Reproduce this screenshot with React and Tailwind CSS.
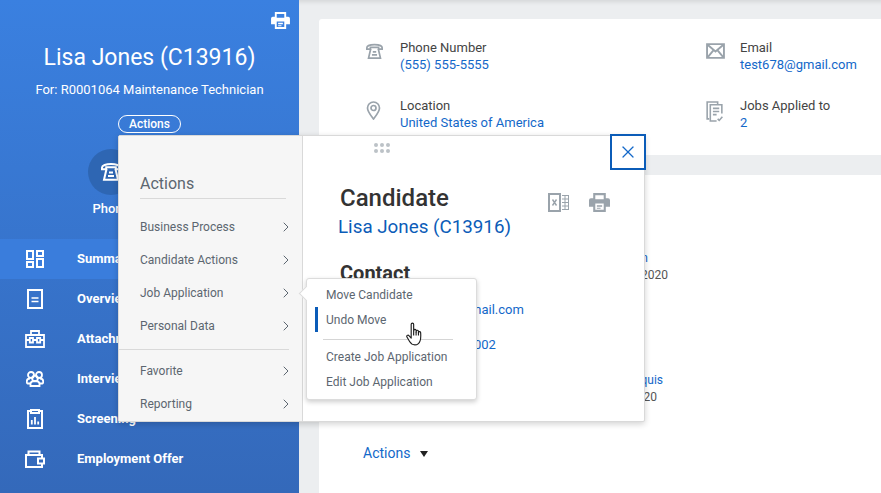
import React from 'react';
import { ChevronRight, X } from 'lucide-react';

const PrintIcon = ({ className }) => (
  <svg viewBox="0 0 20 18" className={className} fill="currentColor">
    <path fillRule="evenodd" d="M4 0h12v5h2.200A1.800 1.800 0 0 1 20 6.800V13h-4v5H4v-5H0V6.800A1.800 1.800 0 0 1 1.800 5H4V0zm2 2v4h8V2H6zM6 10v6h8v-6H6zm1.500 1.500h5V13h-5v-1.500zM7.500 14h3.500v1H7.500v-1z" />
  </svg>
);

const PhoneIcon = ({ className }) => (
  <svg viewBox="0 0 20 18" className={className} fill="none" stroke="currentColor" strokeWidth="2">
    <path d="M1 6.200V4.500C1 2.500 5 1 10 1s9 1.500 9 3.500v1.700h-4.200V4.200H5.200v2H1z" />
    <path d="M5.500 6 3 16.800h14L14.500 6" />
    <path d="M8 9.500h4M7 13h6" />
  </svg>
);

const MailIcon = ({ className }) => (
  <svg viewBox="0 0 18 15" className={className} fill="none" stroke="currentColor" strokeWidth="1.800">
    <path d="M1 1h16v13H1z" />
    <path d="m1.500 1.500 7.500 6.500 7.500-6.500M1.500 13.500 7 7M16.500 13.500 11 7" />
  </svg>
);

const PinIcon = ({ className }) => (
  <svg viewBox="0 0 14 19" className={className} fill="none" stroke="currentColor" strokeWidth="1.700">
    <path d="M7 18C3.500 13.500 1 10.500 1 7a6 6 0 0 1 12 0c0 3.500-2.500 6.500-6 11z" />
    <circle cx="7" cy="7" r="2.500" />
  </svg>
);

const JobsIcon = ({ className }) => (
  <svg viewBox="0 0 16 20" className={className} fill="none" stroke="currentColor" strokeWidth="1.500">
    <path d="M3 17H1V1h10v2" />
    <path d="M15 12V3.500H4V19h6" />
    <path d="M6.500 7H12.500M6.500 10H12.500M6.500 13H10" />
    <path d="m11 17 1.500 1.500L15.500 15" />
  </svg>
);

const SummaryIcon = () => (
  <svg viewBox="0 0 18 18" className="h-[18px] w-[18px]" fill="none" stroke="currentColor" strokeWidth="2">
    <path d="M1 1h6v8H1zM1 12h6v5H1zM11 1h6v5h-6zM11 9h6v8h-6z" />
  </svg>
);

const OverviewIcon = () => (
  <svg viewBox="0 0 16 20" className="h-[20px] w-[16px]" fill="none" stroke="currentColor" strokeWidth="2">
    <path d="M1 1h14v18H1z" />
    <path d="M4.500 9h7M4.500 12.500h7" strokeWidth="1.600" />
  </svg>
);

const AttachIcon = () => (
  <svg viewBox="0 0 20 18" className="h-[18px] w-[20px]" fill="none" stroke="currentColor" strokeWidth="1.800">
    <path d="M1 5h18v12H1zM6 4.500V1h8v3.500M1 10h3.500M15.500 10H19M8 10h4" />
    <path d="M4.800 8H8v4.500H4.800zM12 8h3.200v4.500H12z" />
  </svg>
);

const PeopleIcon = () => (
  <svg viewBox="0 0 18 16" className="h-[16px] w-[18px]" fill="none" stroke="currentColor" strokeWidth="1.800">
    <circle cx="5" cy="4" r="3" />
    <circle cx="13" cy="4" r="3" />
    <circle cx="9" cy="7.500" r="2.800" />
    <path d="M4.500 15v-2c0-2 2-3 4.500-3s4.500 1 4.500 3v2h-9z" />
    <path d="M4.500 12.500H1.500C.8 12.500.8 11.500.8 10.500c0-1.500 1.200-3 3.200-3M13.500 12.500h3c.7 0 .7-1 .7-2 0-1.500-1.200-3-3.200-3" />
  </svg>
);

const ScreenIcon = () => (
  <svg viewBox="0 0 16 20" className="h-[20px] w-[16px]" fill="none" stroke="currentColor" strokeWidth="2">
    <path d="M4 2H1v17h14V2h-3" />
    <path d="M4 1h8v3H4z" />
    <path d="M4.800 15.500V11M8 15.500V8M11.200 15.500V12.500" strokeWidth="1.800" />
  </svg>
);

const WalletIcon = () => (
  <svg viewBox="0 0 20 18" className="h-[18px] w-[20px]" fill="none" stroke="currentColor" strokeWidth="2">
    <path d="M1 5h16v12H1zM3.500 4.500V1.500h11v3" />
    <path d="M13 8.500h6v5h-6z" fill="#3469ba" />
  </svg>
);

const ExcelIcon = ({ className }) => (
  <svg viewBox="0 0 21 19" className={className} fill="none" stroke="currentColor">
    <path d="M1 1h11v17H1z" strokeWidth="2" />
    <path d="m4.500 6.500 4 6M8.500 6.500l-4 6" strokeWidth="1.400" />
    <path d="M14 2.500h6.500M14 6h6.500M14 9.500h6.500M14 13h6.500M14 16.500h6.500M17 2v15M20.500 2v15" strokeWidth="1" />
  </svg>
);

const HandCursor = ({ className }) => (
  <svg viewBox="0 0 18 26" className={className} fill="#fff" stroke="#1d1d1d" strokeWidth="1.200" strokeLinejoin="round">
    <path d="M5.500 2.200c0-1.600 2.600-1.600 2.600 0v8.300l.2-2c.3-1.300 2.300-1.200 2.400.2v2l.2-1.400c.3-1.200 2.200-1 2.300.3v1.700l.2-.8c.4-1 2-.7 2.100.5.200 2.600.2 6.500-.6 8.700-.7 2.200-2.100 4.300-5.500 4.300-2.800 0-4.400-1.400-5.600-3.500L1 15.600c-.8-1.400 1.100-2.600 2.100-1.400l2.400 2.600V2.200z" />
    <path d="M8.100 10.500v3.500M10.700 10.700V14M13.200 11v3" fill="none" />
  </svg>
);

const navItems = [
  { label: 'Summary', icon: <SummaryIcon />, active: true },
  { label: 'Overview', icon: <OverviewIcon /> },
  { label: 'Attachments', icon: <AttachIcon /> },
  { label: 'Interviews', icon: <PeopleIcon /> },
  { label: 'Screening', icon: <ScreenIcon /> },
  { label: 'Employment Offer', icon: <WalletIcon /> },
];

const Sidebar = () => (
  <aside className="flex w-[299px] shrink-0 flex-col bg-gradient-to-b from-[#3a80e0] to-[#3469ba] text-white">
    <div className="flex justify-end pr-[9px] pt-[12px]">
      <PrintIcon className="h-[17px] w-[19px]" />
    </div>
    <h1 className="mt-[15px] text-center text-[23px] leading-[28px]">Lisa Jones (C13916)</h1>
    <p className="mt-[9px] text-center text-[13px] leading-[18px] text-white">For: R0001064 Maintenance Technician</p>
    <div className="mt-[16px] flex justify-center">
      <span className="rounded-full border border-white px-[10px] text-[12px] font-medium leading-[16px]">Actions</span>
    </div>
    <div className="ml-[88px] mt-[16px] flex w-[46px] flex-col items-center">
      <div className="flex h-[46px] w-[46px] shrink-0 items-center justify-center rounded-full bg-[#2e66b3]">
        <PhoneIcon className="h-[18px] w-[20px]" />
      </div>
      <span className="mt-[5px] text-[13px] font-medium leading-[18px]">Phone</span>
    </div>
    <nav className="mt-[21px] flex flex-col">
      {navItems.map((item) => (
        <div key={item.label} className={`flex h-[40px] items-center ${item.active ? 'bg-[#3a7ddc]' : ''}`}>
          <span className="flex w-[77px] shrink-0 justify-center pr-[7px]">{item.icon}</span>
          <span className="text-[13px] font-bold">{item.label}</span>
        </div>
      ))}
    </nav>
  </aside>
);

const Detail = ({ icon, label, value }) => (
  <div className="flex h-[58px]">
    <span className="flex w-[38px] shrink-0 pl-[4px] pt-[4px] text-[#9aa3ab]">{icon}</span>
    <div className="text-[13px] leading-[17px]">
      <p className="text-[#444]">{label}</p>
      <a className="text-[#1368c9]">{value}</a>
    </div>
  </div>
);

const Main = () => (
  <main className="flex min-w-0 flex-1 flex-col pl-[20px] pt-[19px] shadow-[inset_0_5px_4px_-3px_rgba(0,0,0,0.1)]">
    <section className="h-[136px] rounded-tl-[3px] bg-white pl-[43px] pt-[20px]">
      <div className="grid grid-cols-[340px_1fr]">
        <Detail icon={<PhoneIcon className="h-[17px] w-[17px]" />} label="Phone Number" value="(555) 555-5555" />
        <Detail icon={<MailIcon className="h-[16px] w-[19px]" />} label="Email" value="test678@gmail.com" />
        <Detail icon={<PinIcon className="h-[19px] w-[15px]" />} label="Location" value="United States of America" />
        <Detail icon={<JobsIcon className="h-[21px] w-[17px]" />} label="Jobs Applied to" value="2" />
      </div>
    </section>
    <section className="mt-[20px] flex-1 bg-white pl-[44px]">
      <div className="w-[305px] pt-[75px] text-right text-[12px] leading-[17px]">
        <p className="pr-[20px] text-[#1368c9]">Application</p>
        <p className="text-[#555]">01/15/2020</p>
      </div>
      <div className="w-[305px] pt-[88px] text-right text-[12px] leading-[17px]">
        <p className="pr-[5px] text-[#1368c9]">Marquis</p>
        <p className="pr-[11px] text-[#555]">2020</p>
      </div>
      <div className="mt-[37px] flex items-center gap-[10px] text-[14px] text-[#1368c9]">
        Actions
        <span className="h-0 w-0 border-x-[4px] border-t-[6px] border-x-transparent border-t-[#222]" />
      </div>
    </section>
  </main>
);

const MenuRow = ({ label }) => (
  <div className="flex h-[33px] items-center justify-between pl-[21px] pr-[8px] text-[12px] text-[#5c6670]">
    {label}
    <ChevronRight size={16} strokeWidth={1.500} className="text-[#5c6670]" />
  </div>
);

const ActionsPanel = () => (
  <div className="flex w-[184px] shrink-0 flex-col border-r border-[#d9d9d9] bg-[#f6f6f6] pt-[37px]">
    <div className="mx-[21px] mr-[16px] border-b border-[#d9d9d9] pb-[3px] text-[16px] leading-[22px] text-[#5c6670]">Actions</div>
    <div className="mt-[11px]">
      <MenuRow label="Business Process" />
      <MenuRow label="Candidate Actions" />
      <MenuRow label="Job Application" />
      <MenuRow label="Personal Data" />
    </div>
    <div className="mr-[13px] mt-[7px] border-t border-[#d9d9d9]" />
    <div className="mt-[4px]">
      <MenuRow label="Favorite" />
      <MenuRow label="Reporting" />
    </div>
  </div>
);

const Popup = () => (
  <div className="absolute left-[187px] top-[142px] z-10 h-[122px] w-[171px] rounded-[3px] border border-[#dcdcdc] bg-white text-[12px] leading-[18px] text-[#5c6670] shadow-[0_2px_5px_rgba(0,0,0,0.2)]">
    <span className="absolute -left-[6px] top-[9px] h-[11px] w-[11px] rotate-45 border-b border-l border-[#dcdcdc] bg-white" />
    <div className="mb-[3px] pl-[19px] pt-[7px]">Move Candidate</div>
    <div className="ml-[8px] flex h-[25px] items-center border-l-[3px] border-[#0b5cb8] pl-[8px]">Undo Move</div>
    <div className="ml-[16px] mr-[23px] mt-[7px] border-t border-[#d5d5d5]" />
    <div className="mt-[8px] pl-[19px]">Create Job Application</div>
    <div className="mt-[7px] pl-[19px]">Edit Job Application</div>
    <HandCursor className="absolute left-[99px] top-[43px] h-[25px] w-[17px]" />
  </div>
);

const ContentPanel = () => (
  <div className="relative flex-1 pl-[37px] pt-[48px]">
    <div className="absolute left-[71px] top-[7px] grid grid-cols-3 gap-[2px]">
      {[0, 1, 2, 3, 4, 5].map((n) => (
        <span key={n} className="h-[4px] w-[4px] rounded-full bg-[#bcc2c7]" />
      ))}
    </div>
    <div className="absolute -right-[2px] -top-[2px] flex h-[36px] w-[36px] items-center justify-center border-2 border-[#0b5cb8] bg-white text-[#1368c9]">
      <X size={20} strokeWidth={1.500} />
    </div>
    <div className="flex items-start justify-between pr-[34px]">
      <h2 className="text-[24px] font-medium leading-[28px] text-[#333]">Candidate</h2>
      <div className="mt-[9px] flex gap-[20px] text-[#9aa3ab]">
        <ExcelIcon className="h-[19px] w-[21px]" />
        <PrintIcon className="h-[19px] w-[21px]" />
      </div>
    </div>
    <a className="-ml-[2px] mt-[3px] block text-[18.8px] leading-[24px] text-[#0b5cb8]">Lisa Jones (C13916)</a>
    <h3 className="mt-[22px] text-[20px] font-bold leading-[24px] text-[#333]">Contact</h3>
    <p className="mt-[15px] pl-[67px] text-[13px] text-[#1368c9]">test678@gmail.com</p>
    <p className="mt-[15px] pl-[67px] text-[13px] text-[#1368c9]">(555) 555-3002</p>
  </div>
);

const App = () => (
  <div className="relative flex h-[493px] w-[881px] overflow-hidden bg-[#eceef0] font-['Roboto',sans-serif]">
    <Sidebar />
    <Main />
    <div className="absolute left-[118px] top-[135px] flex h-[287px] w-[527px] rounded-[2px] border border-[#d9d9d9] bg-white shadow-[0_2px_6px_rgba(0,0,0,0.18)]">
      <ActionsPanel />
      <ContentPanel />
      <Popup />
    </div>
  </div>
);

export default App;
